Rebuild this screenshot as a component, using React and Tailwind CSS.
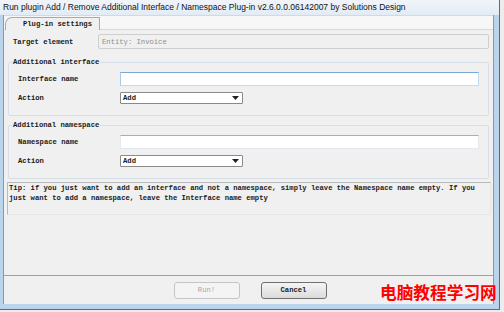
import React from "react";

const mono = "font-['Liberation_Mono',monospace] text-[7.2px] leading-[10px] text-[#1a1a1a]";

function Select() {
  return (
    <div className="w-[123px] h-[12px] bg-white border border-[#8a8a8a] rounded-[1px] flex items-center justify-between pl-[2px] pr-[3px]">
      <span className={mono + " font-bold"}>Add</span>
      <svg width="7" height="4" viewBox="0 0 7 4">
        <path d="M0 0 L7 0 L3.5 4 Z" fill="#222" />
      </svg>
    </div>
  );
}

function Group({ title, label, focused }) {
  return (
    <fieldset className="mx-[4px] border border-[#d5dfe5] rounded-[2px] pl-[9px] pr-[9px] pt-[5px] pb-[11px] flex flex-col gap-[6px]">
      <legend className={mono + " font-bold px-[1px] ml-[-6px]"}>{title}</legend>
      <div className="flex items-center">
        <span className={mono + " font-bold w-[102px]"}>{label}</span>
        <div
          className={
            "flex-1 h-[14px] bg-white border " +
            (focused
              ? "border-[#c5dbef] border-t-[#7aa7d6] border-l-[#a8c8e6]"
              : "border-[#e3e9ef] border-t-[#abadb3]")
          }
        />
      </div>
      <div className="flex items-center">
        <span className={mono + " font-bold w-[102px]"}>Action</span>
        <Select />
      </div>
    </fieldset>
  );
}

export default function App() {
  return (
    <div className="w-[504px] h-[312px] bg-[#ececec] relative overflow-hidden">
      <div className="w-[500px] h-[310px] bg-[#bcd3ec] border-r border-b border-[#5f6b78] flex flex-col">
        <div className="h-[15px] bg-gradient-to-b from-[#f1f5fa] to-[#e2ebf5] pl-[3px] flex items-center font-['Liberation_Sans',sans-serif] text-[8.5px] text-[#111]">
          Run plugin Add / Remove Additional Interface / Namespace Plug-in v2.6.0.0.06142007 by Solutions Design
        </div>
        <div className="flex-1 flex pl-[3px] pr-[5px] pb-[5px]">
          <div className="flex-1 bg-[#f0f0f0] border-l border-r border-[#8a98a8] flex flex-col">
            <div className="h-[15px] bg-[#f7f7f7] border-t border-b border-[#d8d8d8] flex items-end">
              <div className="ml-[1px] w-[95px] h-[13px] -mb-px bg-[#f0f0f0] border border-b-0 border-[#a9a9a9] rounded-tl-[7px] flex items-center justify-center pl-[10px]">
                <span className={mono + " font-bold"}>Plug-in settings</span>
              </div>
            </div>
            <div className="flex-1 border-b border-[#a0a0a0] flex flex-col">
              <div className="mt-[4px] pl-[9px] pr-[4px] flex items-center">
                <span className={mono + " font-bold w-[85px]"}>Target element</span>
                <div className="flex-1 h-[15px] border border-[#cfcfcf] rounded-[2px] bg-[#f0f0f0] flex items-center pl-[3px]">
                  <span className={mono + " text-[#8f8f8f]"}>Entity: Invoice</span>
                </div>
              </div>
              <div className="mt-[8px]">
                <Group title="Additional interface" label="Interface name" focused />
              </div>
              <div className="mt-[4px]">
                <Group title="Additional namespace" label="Namespace name" />
              </div>
              <div className="mt-[3px] mx-[3px] mr-[2px] h-[33px] border border-[#b9b9b9] border-r-[#e6e6e6] border-b-[#e6e6e6] pl-[1px] pr-[2px]">
                <p className={mono + " font-bold"}>
                  Tip: if you just want to add an interface and not a namespace, simply leave the Namespace name empty. If you just want to add a namespace, leave the Interface name empty
                </p>
              </div>
            </div>
            <div className="h-[28px] flex items-center justify-center gap-[21px] pl-[3px]">
              <div className="w-[66px] h-[17px] border border-[#c3c6c9] rounded-[3px] bg-[#f4f4f4] flex items-center justify-center">
                <span className={mono + " text-[#a7a7a7]"}>Run!</span>
              </div>
              <div className="w-[66px] h-[17px] border border-[#707070] rounded-[3px] bg-gradient-to-b from-[#f4f4f4] to-[#dcdcdc] flex items-center justify-center">
                <span className={mono + " font-bold"}>Cancel</span>
              </div>
            </div>
          </div>
        </div>
      </div>
      <div className="absolute left-[380px] top-[281px] font-['Noto_Sans_CJK_SC',sans-serif] font-bold text-[16.7px] leading-[22px] text-[#ff0000]">
        电脑教程学习网
      </div>
    </div>
  );
}
